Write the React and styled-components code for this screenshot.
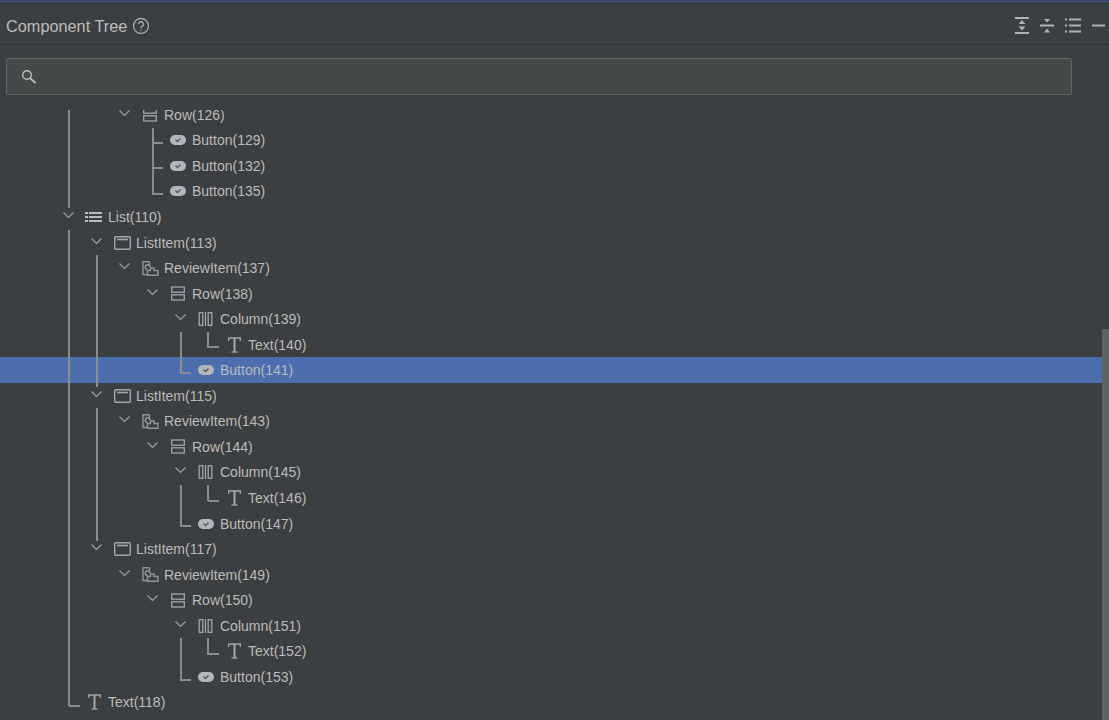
import React from 'react';
import styled, { createGlobalStyle } from 'styled-components';

const GlobalStyle = createGlobalStyle`
  html, body {
    margin: 0;
    padding: 0;
    height: 100%;
    overflow: hidden;
    background: #3c3f41;
  }
  #root {
    height: 100%;
  }
`;

const Panel = styled.div`
  display: flex;
  flex-direction: column;
  height: 720px;
  background: #3c3f41;
  color: #bbbbbb;
  font-family: 'Liberation Sans', Arial, sans-serif;
  font-size: 14px;
  overflow: hidden;
`;

const TopStrip = styled.div`
  flex: none;
  height: 3px;
  background: #3d4b63;
  border-bottom: 1px solid #323232;
`;

const Toolbar = styled.div`
  flex: none;
  display: flex;
  align-items: center;
  height: 41px;
  padding: 4px 4px 0 6px;
  box-sizing: border-box;
  border-bottom: 1px solid #323232;
`;

const Title = styled.span`
  font-size: 16.3px;
  color: #bbbbbb;
`;

const HelpIcon = styled.svg`
  margin-left: 5px;
  width: 18px;
  height: 18px;
`;

const ToolbarActions = styled.div`
  margin-left: auto;
  display: flex;
  align-items: center;
  gap: 9px;
`;

const ActionIcon = styled.svg`
  display: block;
  width: ${(p) => p.$width || 16}px;
  height: 18px;
`;

const SearchWrap = styled.div`
  flex: none;
  padding: 13px 37px 15px 6px;
`;

const SearchBox = styled.div`
  display: flex;
  align-items: center;
  height: 37px;
  box-sizing: border-box;
  padding-left: 14px;
  background: #45494a;
  border: 1px solid #646464;
  border-radius: 2px;
`;

const SearchInput = styled.input`
  flex: 1;
  min-width: 0;
  margin-left: 8px;
  background: transparent;
  border: 0;
  outline: 0;
  color: #bbbbbb;
  font: inherit;
`;

const TreeArea = styled.div`
  position: relative;
  flex: 1;
  min-height: 0;
  overflow: hidden;
`;

const Scrollbar = styled.div`
  position: absolute;
  top: 219px;
  right: 0;
  bottom: 0;
  width: 7px;
  background: #5f6364;
`;

const TreeList = styled.div`
  margin-top: -8px;
  width: 1102px;
`;

const TreeRow = styled.div`
  display: flex;
  align-items: center;
  height: 25.55px;
  padding-left: ${(p) => 61 + 28 * p.$depth}px;
  background: ${(p) => (p.$selected ? '#4b6eaf' : 'transparent')};
  white-space: nowrap;
`;

const ChevronSlot = styled.span`
  flex: none;
  display: flex;
  justify-content: center;
  width: 14px;
  margin-right: 10px;
  padding-bottom: 3px;
`;

const IconSlot = styled.span`
  flex: none;
  display: flex;
  justify-content: center;
  width: 18px;
  margin-right: 5px;
`;

const Label = styled.span`
  font-size: 14px;
  line-height: 16px;
  color: #bbbbbb;
`;

const GuideLayer = styled.div`
  position: absolute;
  inset: 0;
  pointer-events: none;
`;

const VerticalGuide = styled.div`
  position: absolute;
  left: ${(p) => p.$x - 1}px;
  top: ${(p) => p.$top - 110}px;
  height: ${(p) => p.$bottom - p.$top}px;
  width: 2px;
  background: #8a8c8d;
`;

const ElbowGuide = styled.div`
  position: absolute;
  left: ${(p) => p.$x}px;
  top: ${(p) => p.$y - 110}px;
  height: 2px;
  width: ${(p) => p.$width}px;
  background: #8a8c8d;
`;

const Chevron = () => (
  <svg width="11" height="7" viewBox="0 0 11 7" fill="none" stroke="#9da0a2" strokeWidth="1.2">
    <path d="M0.5 0.5 L5.5 5.5 L10.5 0.5" />
  </svg>
);

const stroke = '#a4a6a8';

const ListIcon = () => (
  <svg width="18" height="12" viewBox="0 0 18 12" fill="#b9bbbd">
    <rect x="0" y="1" width="3" height="2" />
    <rect x="0" y="5" width="3" height="2" />
    <rect x="0" y="9" width="3" height="2" />
    <rect x="4" y="1" width="13" height="2" />
    <rect x="4" y="5" width="13" height="2" />
    <rect x="4" y="9" width="13" height="2" />
  </svg>
);

const RowIcon = () => (
  <svg width="16" height="15" viewBox="0 0 16 15" fill="none" stroke={stroke} strokeWidth="1.3">
    <rect x="1.7" y="1" width="12.6" height="5.2" />
    <rect x="1.7" y="8.8" width="12.6" height="5.2" />
  </svg>
);

const ColumnIcon = () => (
  <svg width="16" height="14" viewBox="0 0 16 14" fill="none" stroke={stroke} strokeWidth="1.3">
    <rect x="1.2" y="0.7" width="3.6" height="12.6" />
    <path d="M7.5 0 V14" strokeWidth="1.2" />
    <rect x="10.2" y="0.7" width="3.6" height="12.6" />
  </svg>
);

const ListItemIcon = () => (
  <svg width="17" height="14" viewBox="0 0 17 14" fill="none" stroke={stroke} strokeWidth="1.4">
    <rect x="0.7" y="0.7" width="15.6" height="12.6" rx="1" />
    <path d="M3 3.5 H14" strokeWidth="1.6" />
  </svg>
);

const ReviewIcon = () => (
  <svg width="17" height="15" viewBox="0 0 17 15" fill="none" stroke="#929496" strokeWidth="1.4">
    <path d="M7.5 0.7 H1 V13.5 H5" />
    <path d="M7.5 0.7 V6" />
    <path d="M5.5 8.5 A2.4 2.4 0 1 1 8 5.8" />
    <path d="M5.5 9.5 H8.5 V7 H12 V9.5 H16 V14.3 H5.5 Z" />
  </svg>
);

const ButtonIcon = () => (
  <svg width="16" height="10" viewBox="0 0 16 10">
    <rect x="0" y="0" width="16" height="10" rx="5" fill="#b4b6b8" />
    <path d="M5.5 4.5 L7.5 6.5 L10.5 3.5" fill="none" stroke="#54585a" strokeWidth="1.3" />
  </svg>
);

const TextIcon = () => (
  <svg width="13" height="16" viewBox="0 0 13 16" fill="none" stroke={stroke} strokeWidth="1.3">
    <path d="M0.7 4 V1 H12.3 V4" />
    <path d="M6.5 1 V15" strokeWidth="2" />
    <path d="M3.5 15 H9.5" />
  </svg>
);

const ICONS = {
  list: ListIcon,
  row: RowIcon,
  column: ColumnIcon,
  listItem: ListItemIcon,
  review: ReviewIcon,
  button: ButtonIcon,
  text: TextIcon,
};

const rows = [
  { depth: 2, icon: 'row', label: 'Row(126)', open: true },
  { depth: 3, icon: 'button', label: 'Button(129)' },
  { depth: 3, icon: 'button', label: 'Button(132)' },
  { depth: 3, icon: 'button', label: 'Button(135)' },
  { depth: 0, icon: 'list', label: 'List(110)', open: true },
  { depth: 1, icon: 'listItem', label: 'ListItem(113)', open: true },
  { depth: 2, icon: 'review', label: 'ReviewItem(137)', open: true },
  { depth: 3, icon: 'row', label: 'Row(138)', open: true },
  { depth: 4, icon: 'column', label: 'Column(139)', open: true },
  { depth: 5, icon: 'text', label: 'Text(140)' },
  { depth: 4, icon: 'button', label: 'Button(141)', selected: true },
  { depth: 1, icon: 'listItem', label: 'ListItem(115)', open: true },
  { depth: 2, icon: 'review', label: 'ReviewItem(143)', open: true },
  { depth: 3, icon: 'row', label: 'Row(144)', open: true },
  { depth: 4, icon: 'column', label: 'Column(145)', open: true },
  { depth: 5, icon: 'text', label: 'Text(146)' },
  { depth: 4, icon: 'button', label: 'Button(147)' },
  { depth: 1, icon: 'listItem', label: 'ListItem(117)', open: true },
  { depth: 2, icon: 'review', label: 'ReviewItem(149)', open: true },
  { depth: 3, icon: 'row', label: 'Row(150)', open: true },
  { depth: 4, icon: 'column', label: 'Column(151)', open: true },
  { depth: 5, icon: 'text', label: 'Text(152)' },
  { depth: 4, icon: 'button', label: 'Button(153)' },
  { depth: 0, icon: 'text', label: 'Text(118)' },
];

const verticals = [
  [69, 110, 208],
  [69, 230, 706],
  [97, 255, 387],
  [97, 408, 541],
  [153, 128, 195],
  [181, 332, 374],
  [181, 485, 527],
  [181, 638, 681],
  [208, 332, 348],
  [208, 485, 501],
  [208, 638, 655],
];

const elbows = [
  [69, 705, 11],
  [153, 142, 10],
  [153, 167, 10],
  [153, 193, 10],
  [181, 372, 10],
  [181, 525, 10],
  [181, 679, 10],
  [208, 346, 11],
  [208, 500, 11],
  [208, 653, 11],
];

export default function App() {
  return (
    <Panel>
      <GlobalStyle />
      <TopStrip />
      <Toolbar>
        <Title>Component Tree</Title>
        <HelpIcon viewBox="0 0 18 18" fill="none" stroke="#a4a6a8" strokeWidth="1.3">
          <circle cx="9" cy="9" r="7.5" />
          <path d="M6.6 7.2 A2.4 2.4 0 1 1 9.8 9.4 Q9 9.8 9 11" />
          <path d="M9 12.2 V13.6" />
        </HelpIcon>
        <ToolbarActions>
          <ActionIcon viewBox="0 0 16 18" fill="#afb1b3">
            <rect x="0" y="0" width="14" height="2" />
            <rect x="0" y="15" width="14" height="2" />
            <path d="M7 3 L10.5 7 H3.5 Z" />
            <path d="M7 13.5 L10.5 9.5 H3.5 Z" />
          </ActionIcon>
          <ActionIcon viewBox="0 0 16 18" fill="#afb1b3">
            <rect x="0" y="7.5" width="14" height="2" />
            <path d="M7 5.5 L10 2 H4 Z" />
            <path d="M7 11.5 L10 15.5 H4 Z" />
          </ActionIcon>
          <ActionIcon viewBox="0 0 16 18" fill="#afb1b3">
            <rect x="0" y="1.5" width="2" height="2" />
            <rect x="0" y="7.5" width="2" height="2" />
            <rect x="0" y="13.5" width="2" height="2" />
            <rect x="4" y="1.5" width="12" height="2" />
            <rect x="4" y="7.5" width="12" height="2" />
            <rect x="4" y="13.5" width="12" height="2" />
          </ActionIcon>
          <ActionIcon $width={15} viewBox="0 0 15 18" fill="#afb1b3">
            <rect x="2" y="7.5" width="13" height="2" />
          </ActionIcon>
        </ToolbarActions>
      </Toolbar>
      <SearchWrap>
        <SearchBox>
          <svg width="16" height="16" viewBox="0 0 16 16" fill="none" stroke="#bfc1c3" strokeWidth="1.4">
            <circle cx="6" cy="6" r="4.3" />
            <path d="M9.3 9.3 L14.5 14" strokeWidth="1.8" />
          </svg>
          <SearchInput aria-label="Search" />
        </SearchBox>
      </SearchWrap>
      <TreeArea>
        <TreeList>
          {rows.map((row) => {
            const Icon = ICONS[row.icon];
            return (
              <TreeRow key={row.label} $depth={row.depth} $selected={row.selected}>
                <ChevronSlot>{row.open && <Chevron />}</ChevronSlot>
                <IconSlot>
                  <Icon />
                </IconSlot>
                <Label>{row.label}</Label>
              </TreeRow>
            );
          })}
        </TreeList>
        <GuideLayer>
          {verticals.map(([x, top, bottom]) => (
            <VerticalGuide key={`${x}-${top}`} $x={x} $top={top} $bottom={bottom} />
          ))}
          {elbows.map(([x, y, width]) => (
            <ElbowGuide key={`${x}-${y}`} $x={x} $y={y} $width={width} />
          ))}
        </GuideLayer>
        <Scrollbar />
      </TreeArea>
    </Panel>
  );
}
